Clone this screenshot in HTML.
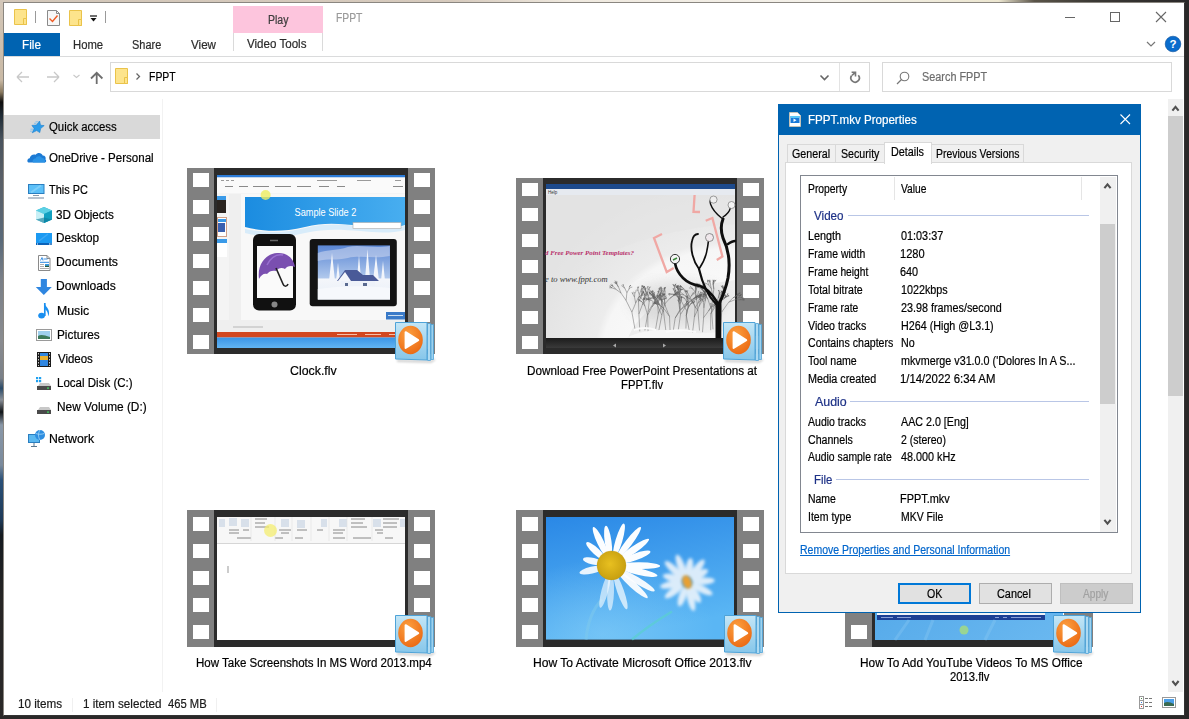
<!DOCTYPE html>
<html><head><meta charset="utf-8">
<style>
*{margin:0;padding:0;box-sizing:border-box}
html,body{width:1189px;height:719px;overflow:hidden}
body{position:relative;background:#2a2828;font-family:"Liberation Sans",sans-serif}
.a{position:absolute}
.t{position:absolute;white-space:nowrap;line-height:20px;transform-origin:0 0;font-family:"Liberation Sans",sans-serif;-webkit-text-stroke:0.2px currentColor}
svg{position:absolute;overflow:visible}
</style></head><body>
<!-- desktop strips -->
<div class=a style="left:0;top:0;width:1189px;height:3px;background:linear-gradient(90deg,#d3c7b9 0%,#d6cabd 38%,#efe9df 48%,#f4f1ea 70%,#ece6d0 84%,#5a5448 87%,#3a3834 92%,#2a2828 100%)"></div>
<div class=a style="left:0;top:0;width:4px;height:719px;background:linear-gradient(180deg,#d3c7b9 0.0%,#c9b9a5 11.1%,#8a7a60 12.8%,#0e0e0e 14.2%,#1e2a34 16.0%,#4a545e 19.5%,#5a6068 25.0%,#5a6a7a 33.4%,#7a8088 38.9%,#8a8c90 47.3%,#7a8088 52.6%,#2a4a68 54.0%,#8a9098 55.6%,#101418 57.3%,#8a98a8 59.1%,#7a8a9c 64.7%,#2a5078 66.8%,#1e3a58 72.3%,#151a20 74.4%,#262525 83.4%,#2a2828 100.0%)"></div>
<!-- window -->
<div class=a style="left:3px;top:2px;width:1182px;height:714px;border:1px solid #8a8680;border-right-color:#333;border-bottom-color:#333;background:#fff"></div>

<!-- QAT -->
<svg style="left:0;top:0" width="120" height="30">
  <path d="M14.5 9.5h12v15h-12z" fill="#fde48c" stroke="#eac34a"/>
  <path d="M23.5 18.5h3v6h-3z" fill="#fde48c" stroke="#eac34a"/>
  <path d="M35.5 11v12" stroke="#9a9a9a"/>
  <path d="M47.5 10.5h9l3 3v12h-12z" fill="#f7f7f7" stroke="#8a8a8a"/>
  <path d="M56.5 10.5v3h3" fill="none" stroke="#8a8a8a"/>
  <path d="M49.5 18.5l3 3l5-6" fill="none" stroke="#f05a22" stroke-width="1.4"/>
  <path d="M69.5 10.5h12v15h-12z" fill="#fde48c" stroke="#eac34a"/>
  <path d="M78.5 19.5h3v6h-3z" fill="#fde48c" stroke="#eac34a"/>
  <path d="M90 16h7" stroke="#111" stroke-width="1.2"/>
  <path d="M90.5 18h6l-3 3.5z" fill="#111"/>
  <path d="M105.5 11v12" stroke="#9a9a9a"/>
</svg>
<!-- pink play tab -->
<div class=a style="left:233px;top:6px;width:90px;height:27px;background:#fdc5dd"></div>
<div class=a style="left:233px;top:33px;width:1px;height:18px;background:#dadada"></div>
<div class=a style="left:322px;top:33px;width:1px;height:18px;background:#dadada"></div>
<!-- window controls -->
<div class=a style="left:1065px;top:17px;width:10px;height:1px;background:#666"></div>
<div class=a style="left:1110px;top:12px;width:10px;height:10px;border:1px solid #666"></div>
<svg style="left:1156px;top:12px" width="11" height="11"><path d="M0 0L10 10M10 0L0 10" stroke="#666" stroke-width="1.1"/></svg>
<!-- ribbon -->
<div class=a style="left:4px;top:33px;width:56px;height:23px;background:#0063b1"></div>
<div class=a style="left:4px;top:56px;width:1180px;height:1px;background:#dadbdc"></div>
<svg style="left:1146px;top:41px" width="10" height="6"><path d="M1 1L5 5L9 1" fill="none" stroke="#777" stroke-width="1.2"/></svg>
<svg style="left:1165px;top:36px" width="16" height="16"><circle cx="8" cy="8" r="7.8" fill="#0a6ccc"/><circle cx="8" cy="8" r="7.8" fill="none" stroke="#0a4f9a" stroke-width="0.6"/><text x="8" y="12.3" text-anchor="middle" font-family="Liberation Sans" font-weight="bold" font-size="11.5" fill="#fff">?</text></svg>
<!-- nav buttons -->
<svg style="left:0;top:60px" width="110" height="30">
  <path d="M17 17h12M17 17l5-5M17 17l5 5" fill="none" stroke="#c8c8c8" stroke-width="1.3"/>
  <path d="M59 17H47M59 17l-5-5M59 17l-5 5" fill="none" stroke="#c8c8c8" stroke-width="1.3"/>
  <path d="M73.5 15l3 2.5l3-2.5" fill="none" stroke="#c8c8c8" stroke-width="1.1"/>
  <path d="M96.7 13v11M91 18.5l5.7-5.7l5.7 5.7" fill="none" stroke="#6e6e6e" stroke-width="1.8"/>
</svg>
<!-- address bar -->
<div class=a style="left:110px;top:62px;width:760px;height:30px;border:1px solid #d9d9d9"></div>
<div class=a style="left:839px;top:63px;width:1px;height:28px;background:#e3e3e3"></div>
<svg style="left:110px;top:62px" width="60" height="30">
  <path d="M5.5 6.5h12v15h-12z" fill="#fde48c" stroke="#eac34a"/>
  <path d="M14.5 15.5h3v6h-3z" fill="#fde48c" stroke="#eac34a"/>
  <path d="M26.5 11.5l3 3l-3 3" fill="none" stroke="#666" stroke-width="1.3"/>
</svg>
<svg style="left:818px;top:72px" width="14" height="10"><path d="M2.5 3.5l4 4l4-4" fill="none" stroke="#666" stroke-width="1.6"/></svg>
<svg style="left:847px;top:70px" width="16" height="16"><path d="M4.66 5.59A4.2 4.2 0 1 0 11.32 5.3" fill="none" stroke="#777" stroke-width="1.7"/><path d="M5 5.3L8.3 2.4M4.6 2.3H8.5V6.5" fill="none" stroke="#777" stroke-width="1.6"/></svg>
<div class=a style="left:882px;top:62px;width:290px;height:30px;border:1px solid #d9d9d9"></div>
<svg style="left:895px;top:70px" width="16" height="16"><circle cx="9.5" cy="6.5" r="4.3" fill="none" stroke="#777" stroke-width="1.1"/><path d="M6.5 9.5L2 14" stroke="#777" stroke-width="1.2"/></svg>

<!-- nav pane -->
<div class=a style="left:4px;top:115px;width:156px;height:24px;background:#d9d9d9"></div>
<div class=a style="left:162px;top:99px;width:1px;height:593px;background:#f2f2f2"></div>
<!-- nav icons -->
<svg style="left:0;top:0" width="60" height="460">
  <!-- quick access star -->
  <path d="M39.6 121.0L40.5 125.2L44.2 125.6L40.6 128.6L39.8 132.6L36.7 130.6L32.2 132.8L34.1 128.6L31.9 125.4L36.4 125.1Z" fill="#2a9bea" stroke="#1a7fd0" stroke-width="0.6" stroke-linejoin="round"/>
  <path d="M35.5 121.8h3M34 123.3h2.5M30.5 129.2h3M30 131.2h2.5" stroke="#7cc0f0" stroke-width="0.9"/>
  <!-- onedrive -->
  <path d="M28.5 162.5c-1.5 0-1.8-4 1.2-4.2c0.5-3 3.5-4.5 6-3.5c1.5-2.5 6-2.5 7 0.8c2.5 0 3.5 2 2.8 4c1 0.5 1 2.9-0.5 2.9z" fill="#1c7ad4"/>
  <path d="M33 162.5c-1 -2 0.5-4 2.5-4c1-2.5 5-3 6.5-0.5c2 0 3.5 1.5 3 4.5z" fill="#2a93e6"/>
  <!-- this pc -->
  <rect x="28.5" y="184.5" width="15.5" height="9" fill="#5cc0f8" stroke="#2a7ec0"/>
  <path d="M31 192.5l10-7" stroke="#a8e0fc" stroke-width="2" opacity="0.45"/>
  <path d="M33 195.5h6" stroke="#8a9aaa" stroke-width="1"/>
  <path d="M28 198h16" stroke="#9aaaba" stroke-width="1.4"/>
  <!-- 3D objects -->
  <path d="M44 207l8 3.5v9l-8 3.5l-8-3.5v-9z" fill="#22b0cc"/>
  <path d="M36 210.5l8 3.5l8-3.5l-8-3.5z" fill="#5cd0e4"/>
  <path d="M36 210.5v9l8 3.5v-9z" fill="#c8f0f6"/>
  <path d="M44 214v9l8-3.5v-9z" fill="#12a0c0"/>
  <path d="M36 219.5l8 3.5l8-3.5l-8-2z" fill="#0a7898" opacity="0.6"/>
  <!-- desktop -->
  <rect x="36" y="233" width="16" height="12" fill="#1c9af2"/>
  <rect x="36" y="243" width="16" height="2" fill="#0b62b8"/>
  <rect x="37" y="243.5" width="1" height="1" fill="#fff"/><rect x="49" y="243.5" width="1" height="1" fill="#fff"/><rect x="50.5" y="243.5" width="1" height="1" fill="#fff"/>
  <path d="M39 241l9-7" stroke="#60b8f8" stroke-width="1.5" opacity="0.5"/>
  <!-- documents -->
  <path d="M38.5 255.5h8.5l3 3v12h-11.5z" fill="#fff" stroke="#8a8a8a"/>
  <path d="M47 255.5v3h3" fill="none" stroke="#8a8a8a"/>
  <path d="M40.5 260.5l1.5-3l1 3M43.5 259h4" stroke="#2a86e0" stroke-width="0.9" fill="none"/>
  <path d="M40 262.3h9" stroke="#2a86e0" stroke-width="1"/>
  <path d="M40 264.5h4M40 266.5h4M40 268.5h9" stroke="#999" stroke-width="0.8"/>
  <rect x="45" y="264" width="4" height="3" fill="#3a9ae0"/><rect x="45" y="265.8" width="4" height="1.2" fill="#2a5a3a"/>
  <!-- downloads -->
  <path d="M40.8 279h6.1v8h4.9l-8 8l-8-8h5z" fill="#2f86e0"/>
  <!-- music -->
  <path d="M44.8 303v13" stroke="#1a8ff0" stroke-width="1.7"/>
  <ellipse cx="41.6" cy="315.6" rx="3.4" ry="2.9" fill="#1a8ff0"/>
  <path d="M44.5 303.5c1 3 5 5 4.5 10c-0.2 1.5-0.6 2.3-1 2.8c0.3-3-0.8-6-3.5-7.5z" fill="#1a8ff0"/>
  <!-- pictures -->
  <rect x="36.5" y="329.5" width="15" height="11" fill="#fff" stroke="#9a9a9a"/>
  <rect x="38" y="331" width="12" height="8" fill="#9fd0ee"/>
  <path d="M38 336c3-2 6-1 12 1v2h-12z" fill="#3c7a5a"/>
  <!-- videos -->
  <rect x="37" y="352" width="14" height="15" fill="#1a1a1a"/>
  <rect x="40" y="353" width="8" height="13" fill="#2f86e0"/>
  <rect x="40" y="356" width="8" height="4" fill="#e8b030"/>
  <path d="M38.5 353v13M49.5 353v13" stroke="#ccc" stroke-width="1" stroke-dasharray="1.5 1.5"/>
  <!-- local disk -->
  <rect x="36" y="377" width="2.2" height="2.2" fill="#1ea0f0"/><rect x="39" y="377" width="2.2" height="2.2" fill="#1ea0f0"/>
  <rect x="36" y="380" width="2.2" height="2.2" fill="#1ea0f0"/><rect x="39" y="380" width="2.2" height="2.2" fill="#1ea0f0"/>
  <path d="M38 386l2-3h9l2 3z" fill="#c8c8c8"/>
  <rect x="37" y="386" width="14" height="4" fill="#4a4a4a"/>
  <rect x="47" y="387.5" width="2" height="1.2" fill="#3ee060"/>
  <!-- new volume -->
  <path d="M38 410l2-3h9l2 3z" fill="#c8c8c8"/>
  <rect x="37" y="410" width="14" height="4" fill="#4a4a4a"/>
  <rect x="47" y="411.5" width="2" height="1.2" fill="#3ee060"/>
  <!-- network -->
  <rect x="28.5" y="434.5" width="11" height="8" fill="#5ab8f0" stroke="#2a7ec0"/>
  <path d="M31 446.5h6M34 443v3" stroke="#5a7890" stroke-width="1"/>
  <circle cx="40" cy="435" r="5" fill="#2e8ee0"/>
  <path d="M36 433.5c2 1 6 1 8 0M40 430c-2 3-2 7 0 10" stroke="#a6d8f8" stroke-width="0.8" fill="none"/>
</svg>

<!-- main scrollbar -->
<div class=a style="left:1168px;top:99px;width:15px;height:593px;background:#f0f0f0"></div>
<div class=a style="left:1168px;top:116px;width:15px;height:280px;background:#cdcdcd"></div>
<svg style="left:1168px;top:99px" width="15" height="593">
  <path d="M4.4 11.6L7.5 7.8L10.6 11.6" fill="none" stroke="#505050" stroke-width="2.1"/>
  <path d="M4.4 582L7.5 585.8L10.6 582" fill="none" stroke="#505050" stroke-width="2.1"/>
</svg>
<!-- status bar -->
<div class=a style="left:72px;top:698px;width:1px;height:14px;background:#f0f0f0"></div>
<div class=a style="left:216px;top:698px;width:1px;height:14px;background:#f0f0f0"></div>
<svg style="left:1136px;top:694px" width="45" height="18">
  <rect x="3.5" y="2.5" width="4" height="12" fill="#fff" stroke="#999"/>
  <path d="M3.5 6.5h4M3.5 10.5h4" stroke="#999"/>
  <rect x="5" y="4" width="1" height="1" fill="#4a8a4a"/><rect x="5" y="8" width="1" height="1" fill="#3a7ae0"/><rect x="5" y="12" width="1" height="1" fill="#e03030"/>
  <path d="M9 4.5h3M13 4.5h3M9 8.5h3M13 8.5h3M9 12.5h3M13 12.5h3" stroke="#777"/>
  <rect x="26.5" y="3.5" width="13" height="10" fill="#fff" stroke="#999"/>
  <rect x="28" y="5" width="10" height="7" fill="#4a9ee8"/>
  <path d="M28 9c3-2 6-1 10 1v2h-10z" fill="#3a6a50"/>
</svg>
<div class=a style='left:214px;top:168px;width:194px;height:186px;background:#2b2b2b'></div>
<div class=a style='left:187px;top:168px;width:27px;height:186px;background:#808080'></div>
<div class=a style='left:193px;top:173.1px;width:16px;height:14px;background:#fff'></div>
<div class=a style='left:193px;top:200.1px;width:16px;height:14px;background:#fff'></div>
<div class=a style='left:193px;top:227.1px;width:16px;height:14px;background:#fff'></div>
<div class=a style='left:193px;top:254.1px;width:16px;height:14px;background:#fff'></div>
<div class=a style='left:193px;top:281.1px;width:16px;height:14px;background:#fff'></div>
<div class=a style='left:193px;top:308.1px;width:16px;height:14px;background:#fff'></div>
<div class=a style='left:193px;top:335.1px;width:16px;height:14px;background:#fff'></div>
<div class=a style='left:408px;top:168px;width:27px;height:186px;background:#808080'></div>
<div class=a style='left:414px;top:173.1px;width:16px;height:14px;background:#fff'></div>
<div class=a style='left:414px;top:200.1px;width:16px;height:14px;background:#fff'></div>
<div class=a style='left:414px;top:227.1px;width:16px;height:14px;background:#fff'></div>
<div class=a style='left:414px;top:254.1px;width:16px;height:14px;background:#fff'></div>
<div class=a style='left:414px;top:281.1px;width:16px;height:14px;background:#fff'></div>
<div class=a style='left:414px;top:308.1px;width:16px;height:14px;background:#fff'></div>
<div class=a style='left:414px;top:335.1px;width:16px;height:14px;background:#fff'></div>
<svg style="left:217px;top:175px" width="188" height="173">
<defs><linearGradient id="i1h" x1="0" y1="0" x2="1" y2="0"><stop offset="0" stop-color="#1b8ce0"/><stop offset="1" stop-color="#48aef0"/></linearGradient>
<linearGradient id="i1t" x1="0" y1="0" x2="0" y2="1"><stop offset="0" stop-color="#3a94e6"/><stop offset="1" stop-color="#62b4f2"/></linearGradient>
<linearGradient id="i1s" x1="0" y1="0" x2="0" y2="1"><stop offset="0" stop-color="#5a86d4"/><stop offset="0.6" stop-color="#b0c8ec"/><stop offset="0.62" stop-color="#f4f6fa"/><stop offset="1" stop-color="#e8eef8"/></linearGradient></defs>
<rect width="188" height="173" fill="#efefef"/>
<rect width="188" height="2.5" fill="#2b7bd8"/>
<rect y="2.5" width="188" height="16" fill="#fafafa"/>
<path d="M4 5.5h3M9 5.5h3M14 5.5h3M100 5.5h20M140 5.5h14M178 5.5h6" stroke="#9a9a9a" stroke-width="1"/><path d="M8 11.5h8M22 11.5h9M36 11.5h16M58 11.5h16M80 11.5h14M102 11.5h10M120 11.5h8M176 11.5h10" stroke="#8a8a8a" stroke-width="1"/>
<rect y="19" width="12" height="126" fill="#f4f4f4"/>
<rect x="0" y="21" width="9" height="17" fill="#2a2420"/><rect x="0" y="21" width="9" height="4" fill="#3a9ae8"/>
<rect x="0.5" y="42.5" width="9" height="19" fill="#fff" stroke="#d0a088" stroke-width="1"/><rect x="1" y="44" width="8" height="3" fill="#3a9ae8"/><rect x="1" y="48" width="7" height="9" fill="#3a60b0"/>
<rect x="0" y="64" width="10" height="18" fill="#fff"/><rect x="0" y="64" width="10" height="4" fill="#3a9ae8"/>
<rect x="24" y="19" width="164" height="126" fill="#f8f8f8"/>
<path d="M28 22h160v28c-30 10-60 -8 -100 2c-25 6-45 4-60 0z" fill="url(#i1h)"/>
<path d="M28 54c20 4 40 4 60-1c40-10 70 6 100-2v4c-30 8-60 -6 -100 3c-25 6-45 4-60 0z" fill="#d8ecfa"/>
<text x="77.5" y="40.5" textLength="61.8" lengthAdjust="spacingAndGlyphs" font-family="Liberation Sans" font-size="11" fill="#fff">Sample Slide 2</text>
<rect x="136" y="47.5" width="48" height="6" fill="#fff" stroke="#aaa" stroke-width="0.6"/>
<circle cx="48.6" cy="20" r="5" fill="#eeee60" opacity="0.8"/><rect x="36" y="59" width="43" height="76.5" rx="6" fill="#111"/>
<rect x="40" y="71" width="36" height="52" fill="#fafafa"/>
<circle cx="57.5" cy="129.5" r="3" fill="#888"/>
<path d="M53 65.5h8" stroke="#666" stroke-width="1.5"/>
<path d="M42 104c-2-14 6-25 18-26c10-1 17 6 18 14c-4-2-8-1-10 2c-3-2-7-1-9 2c-3-1-7 0-9 3c-3-1-6 1-8 5z" fill="#7a4fb0"/><path d="M50 90c4-8 10-11 16-10" stroke="#9a70d0" stroke-width="1.5" fill="none"/>
<path d="M59 93l7 16c1 3 4 3 5 0" fill="none" stroke="#222" stroke-width="1.6"/>
<rect x="92.7" y="63.9" width="87.1" height="67.3" rx="3" fill="#141414"/>
<rect x="100.8" y="70.4" width="72.2" height="54.2" fill="url(#i1s)"/>
<path d="M100.8 78c10-4 20-2 30-6c12-3 25 2 42-1v10c-15 3-30-1-42 2c-12 3-20 0-30 3z" fill="#c8d4ee" opacity="0.6"/>
<g fill="#f2f5fb"><path d="M112 106l3-28l3 28z"/><path d="M119 106l2-18l2 18z"/><path d="M140 104l2-24l2 24z"/><path d="M148 104l2.5-30l2.5 30z"/><path d="M156 106l3-26l3 26z"/><path d="M164 106l2-20l2 20z"/></g>
<path d="M120 106l8-11h12l6 5l10 0l6 6z" fill="#4a5a98"/>
<path d="M121 106l7-9l6 9z" fill="#f4f6fb"/>
<rect x="124" y="106" width="34" height="8" fill="#eef2fa"/>
<rect x="128" y="108" width="3" height="3" fill="#5a6a90"/><rect x="146" y="108" width="4" height="3" fill="#5a6a90"/>
<path d="M100.8 114c20-3 45-4 72.2-1v11.6h-72.2z" fill="#f6f8fc"/>
<rect x="169" y="137" width="19" height="7.5" fill="#3a7ac8"/><path d="M171 140.5h15" stroke="#cde" stroke-width="1"/>
<path d="M16 152h30" stroke="#aaa" stroke-width="0.8"/>
<rect y="157" width="188" height="5.5" fill="#d2471f"/>
<path d="M120 159.5h20M148 159.5h16M172 159.5h14" stroke="#f8c0a8" stroke-width="1"/>
<rect y="162.5" width="188" height="10.5" fill="url(#i1t)"/>
</svg>
<svg style="left:395px;top:322px" width="42" height="42">
<defs><linearGradient id="wb395322" x1="0" y1="0" x2="0" y2="1"><stop offset="0" stop-color="#c4e6f6"/><stop offset="1" stop-color="#86c6ea"/></linearGradient>
<radialGradient id="wo395322" cx="0.4" cy="0.3" r="0.8"><stop offset="0" stop-color="#fca040"/><stop offset="1" stop-color="#ea6510"/></radialGradient></defs>
<filter id="ws395322" x="-50%" y="-50%" width="200%" height="200%"><feGaussianBlur stdDeviation="1.2"/></filter>
<path d="M2 37.5l34 1l4-2v2l-4 2.5l-34-1z" fill="#000" opacity="0.18" filter="url(#ws395322)"/>
<path d="M36 2.5h2.5v35h-2.5z" fill="#9fd2ee" stroke="#4ea3d8" stroke-width="0.8"/>
<path d="M32.5 1.5h3v37h-3z" fill="#aedaf2" stroke="#4ea3d8" stroke-width="0.8"/>
<path d="M0.5 0.5h31.5v37.5l-31.5 -1z" fill="url(#wb395322)" stroke="#4ea3d8" stroke-width="1"/>
<ellipse cx="15.5" cy="18" rx="12.3" ry="14.2" fill="url(#wo395322)"/>
<path d="M10.6 10.2L10.6 26L23.2 18.2Z" fill="#fff" stroke="#fff" stroke-width="2" stroke-linejoin="round"/>
</svg>
<div class=a style='left:543px;top:178px;width:194px;height:176px;background:#2b2b2b'></div>
<div class=a style='left:516px;top:178px;width:27px;height:176px;background:#808080'></div>
<div class=a style='left:522px;top:182.8px;width:16px;height:13px;background:#fff'></div>
<div class=a style='left:522px;top:208.4px;width:16px;height:13px;background:#fff'></div>
<div class=a style='left:522px;top:233.9px;width:16px;height:13px;background:#fff'></div>
<div class=a style='left:522px;top:259.5px;width:16px;height:13px;background:#fff'></div>
<div class=a style='left:522px;top:285.0px;width:16px;height:13px;background:#fff'></div>
<div class=a style='left:522px;top:310.6px;width:16px;height:13px;background:#fff'></div>
<div class=a style='left:522px;top:336.1px;width:16px;height:13px;background:#fff'></div>
<div class=a style='left:737px;top:178px;width:27px;height:176px;background:#808080'></div>
<div class=a style='left:743px;top:182.8px;width:16px;height:13px;background:#fff'></div>
<div class=a style='left:743px;top:208.4px;width:16px;height:13px;background:#fff'></div>
<div class=a style='left:743px;top:233.9px;width:16px;height:13px;background:#fff'></div>
<div class=a style='left:743px;top:259.5px;width:16px;height:13px;background:#fff'></div>
<div class=a style='left:743px;top:285.0px;width:16px;height:13px;background:#fff'></div>
<div class=a style='left:743px;top:310.6px;width:16px;height:13px;background:#fff'></div>
<div class=a style='left:743px;top:336.1px;width:16px;height:13px;background:#fff'></div>
<svg style="left:546px;top:184px" width="189" height="164">
<defs><radialGradient id="i2g" cx="0.95" cy="1.05" r="1.05"><stop offset="0" stop-color="#ffffff"/><stop offset="0.62" stop-color="#f6f6f6"/><stop offset="0.66" stop-color="#ececec"/><stop offset="1" stop-color="#e2e2e2"/></radialGradient>
<linearGradient id="i2b" x1="0" y1="0" x2="0" y2="1"><stop offset="0" stop-color="#1c1c1c"/><stop offset="1" stop-color="#3a3a3a"/></linearGradient>
<filter id="bt"><feGaussianBlur stdDeviation="0.35"/></filter><filter id="bl3" x="-50%" y="-50%" width="200%" height="200%"><feGaussianBlur stdDeviation="6"/></filter></defs>
<rect width="189" height="164" fill="url(#i2g)"/>
<path d="M0 110C40 70 110 45 189 40V0H0z" fill="#e4e4e4" opacity="0.6"/>
<rect width="189" height="5" fill="#1d4a8c"/>
<rect y="5" width="189" height="6" fill="#e6eaf0"/>
<text x="2" y="10" font-family="Liberation Sans" font-size="4.5" fill="#333">Help</text>
<text x="-1" y="71" font-family="Liberation Serif" font-style="italic" font-size="6.9" font-weight="bold" fill="#b8306a" transform="scale(1 1)">d Free Power Point Templates?</text>
<text x="-1" y="98" font-family="Liberation Serif" font-style="italic" font-size="8.5" fill="#333">e to www.fppt.com</text>
<g filter="url(#bt)">
<path d="M82 154C95 118 150 100 189 96V154z" fill="#d8d8d8" opacity="0.35"/>
<ellipse cx="132" cy="118" rx="48" ry="22" fill="#b0b0b0" opacity="0.3" filter="url(#bl3)"/>
<g fill="none" stroke="#5e5e5e" stroke-width="0.55" opacity="0.85"><path d="M89.2 146.3L85.9 128.1M85.9 128.1L80.1 116.5M80.1 116.5L80.9 108.7M80.9 108.7L78.8 104.2M78.8 104.2L76.7 102.6M76.7 102.6L75.4 101.6M78.8 104.2L77.4 101.9M77.4 101.9L77.4 100.1M77.4 101.9L76.4 100.5M80.9 108.7L82.9 105.3M82.9 105.3L84.7 103.4M84.7 103.4L86.3 103.1M82.9 105.3L83.5 102.6M83.5 102.6L84.9 101.3M83.5 102.6L84.6 101.0M83.5 102.6L84.7 101.2M80.1 116.5L75.0 109.0M75.0 109.0L72.5 103.1M72.5 103.1L70.8 99.8M70.8 99.8L70.4 97.9M70.8 99.8L68.9 98.7M70.8 99.8L71.0 97.3M72.5 103.1L70.2 99.5M70.2 99.5L69.9 96.9M70.2 99.5L67.8 98.4M70.2 99.5L68.9 96.6M75.0 109.0L69.9 105.3M69.9 105.3L67.0 102.2M67.0 102.2L64.5 101.0M67.0 102.2L64.5 100.9M67.0 102.2L65.7 99.8M69.9 105.3L65.9 103.8M65.9 103.8L63.4 102.3M65.9 103.8L63.7 101.8M65.9 103.8L63.2 103.8M85.9 128.1L89.7 119.0M89.7 119.0L92.5 113.3M92.5 113.3L95.5 110.4M95.5 110.4L96.7 108.7M95.5 110.4L97.4 109.6M92.5 113.3L95.8 111.4M95.8 111.4L97.9 110.9M97.9 110.9L99.4 111.2M97.9 110.9L99.4 110.4M95.8 111.4L97.1 109.1M97.1 109.1L97.6 107.7M97.1 109.1L97.7 107.4M97.1 109.1L97.0 107.3M89.7 119.0L88.5 113.1M88.5 113.1L88.8 109.4M88.8 109.4L89.9 107.4M89.9 107.4L90.2 105.9M88.8 109.4L87.8 107.7M88.5 113.1L86.9 110.1M86.9 110.1L85.9 108.4M86.9 110.1L87.0 108.2M93.8 147.4L92.9 130.0M92.9 130.0L92.5 117.8M92.5 117.8L93.3 110.7M93.3 110.7L92.1 107.0M92.1 107.0L91.9 104.3M91.9 104.3L92.7 102.7M91.9 104.3L91.8 102.7M91.9 104.3L92.3 102.6M92.1 107.0L91.0 105.3M93.3 110.7L95.0 105.9M95.0 105.9L97.3 103.7M97.3 103.7L98.6 102.6M97.3 103.7L98.6 102.0M97.3 103.7L97.7 101.9M95.0 105.9L96.0 102.9M96.0 102.9L97.0 101.2M96.0 102.9L96.0 101.1M96.0 102.9L96.3 101.1M92.5 117.8L95.7 112.1M95.7 112.1L95.5 107.8M95.5 107.8L96.2 105.7M95.5 107.8L96.2 105.5M96.2 105.5L96.0 104.0M95.7 112.1L96.5 108.3M96.5 108.3L97.8 106.9M96.5 108.3L97.2 105.8M97.2 105.8L97.3 104.2M92.9 130.0L96.3 120.8M96.3 120.8L100.0 116.1M100.0 116.1L104.0 114.7M104.0 114.7L106.9 114.2M106.9 114.2L108.6 113.4M106.9 114.2L108.3 113.5M106.9 114.2L108.6 114.2M104.0 114.7L106.5 113.2M106.5 113.2L107.8 112.0M106.5 113.2L108.3 112.0M106.5 113.2L107.2 111.9M100.0 116.1L102.4 114.2M102.4 114.2L104.6 114.0M102.4 114.2L104.3 113.9M96.3 120.8L98.5 115.0M98.5 115.0L100.5 111.6M100.5 111.6L101.1 109.0M101.1 109.0L101.9 107.5M101.1 109.0L100.9 107.4M100.5 111.6L101.0 109.7M98.5 115.0L98.8 111.2M98.8 111.2L97.8 109.0M97.8 109.0L96.8 107.8M97.8 109.0L97.6 107.3M98.8 111.2L98.2 108.9M98.2 108.9L97.1 107.6M98.9 146.5L102.0 127.8M102.0 127.8L103.2 117.7M103.2 117.7L102.5 111.6M102.5 111.6L100.0 108.3M100.0 108.3L99.5 106.0M99.5 106.0L98.7 104.6M100.0 108.3L99.6 105.4M99.6 105.4L100.4 103.8M99.6 105.4L99.3 103.7M99.6 105.4L98.7 103.8M102.5 111.6L103.9 107.9M103.9 107.9L103.6 105.7M103.6 105.7L103.1 104.3M103.9 107.9L105.0 106.2M103.2 117.7L101.4 110.7M101.4 110.7L99.3 106.6M99.3 106.6L97.7 103.9M97.7 103.9L97.0 102.1M97.7 103.9L96.5 102.2M97.7 103.9L96.2 102.5M99.3 106.6L98.9 103.8M98.9 103.8L98.0 102.5M98.9 103.8L98.3 101.9M98.9 103.8L98.3 102.3M101.4 110.7L102.1 106.2M102.1 106.2L101.7 103.7M101.7 103.7L102.2 102.2M101.7 103.7L101.8 102.1M102.1 106.2L103.4 104.0M103.4 104.0L104.0 102.6M103.4 104.0L104.5 102.8M102.0 127.8L107.3 119.5M107.3 119.5L112.6 116.1M112.6 116.1L116.7 115.6M116.7 115.6L119.4 114.5M119.4 114.5L120.7 113.3M119.4 114.5L120.9 114.8M119.4 114.5L120.9 113.8M116.7 115.6L118.5 114.3M112.6 116.1L115.4 112.7M115.4 112.7L117.3 111.1M117.3 111.1L118.5 110.0M117.3 111.1L118.8 110.4M115.4 112.7L117.7 110.6M117.7 110.6L119.5 110.2M117.7 110.6L119.2 109.5M117.7 110.6L119.4 110.2M107.3 119.5L111.1 114.5M111.1 114.5L111.8 110.6M111.8 110.6L111.8 108.6M111.8 110.6L112.7 107.9M112.7 107.9L112.7 105.9M112.7 107.9L113.3 106.4M112.7 107.9L113.9 106.7M111.1 114.5L112.8 111.7M112.8 111.7L114.5 110.2M114.5 110.2L115.9 109.5M112.8 111.7L114.3 110.8M102.1 148.6L101.7 131.1M101.7 131.1L99.0 122.3M99.0 122.3L97.4 116.5M97.4 116.5L98.7 112.7M98.7 112.7L99.7 110.4M99.7 110.4L100.1 108.8M99.7 110.4L100.1 108.7M98.7 112.7L99.8 110.8M97.4 116.5L95.0 114.1M95.0 114.1L93.3 112.5M95.0 114.1L94.6 112.4M99.0 122.3L96.2 118.0M96.2 118.0L93.5 116.2M93.5 116.2L91.9 114.8M93.5 116.2L92.6 114.8M96.2 118.0L94.0 116.7M94.0 116.7L92.4 116.2M101.7 131.1L105.8 123.2M105.8 123.2L108.7 118.2M108.7 118.2L108.8 114.4M108.8 114.4L110.1 112.3M108.8 114.4L108.2 112.1M108.2 112.1L108.3 110.5M108.7 118.2L109.7 115.2M109.7 115.2L111.0 113.9M109.7 115.2L110.3 113.4M105.8 123.2L108.9 119.6M108.9 119.6L111.2 118.2M111.2 118.2L112.0 116.9M111.2 118.2L112.9 118.0M108.9 119.6L110.0 117.3M109.5 145.7L112.3 129.5M112.3 129.5L115.9 121.4M115.9 121.4L115.2 115.4M115.2 115.4L113.2 112.4M113.2 112.4L112.9 110.2M113.2 112.4L110.8 111.2M115.2 115.4L112.8 112.6M112.8 112.6L111.6 110.9M112.8 112.6L111.5 110.6M115.9 121.4L115.3 116.0M115.3 116.0L115.1 112.3M115.1 112.3L114.8 110.0M114.8 110.0L115.0 108.5M114.8 110.0L114.3 108.6M114.8 110.0L114.4 108.5M115.1 112.3L116.3 110.1M116.3 110.1L117.6 109.1M115.3 116.0L115.2 112.9M115.2 112.9L114.3 111.5M115.2 112.9L114.4 111.0M112.3 129.5L111.5 119.1M111.5 119.1L109.2 114.0M109.2 114.0L108.0 111.4M108.0 111.4L106.7 110.1M108.0 111.4L106.4 110.4M109.2 114.0L108.7 111.2M108.7 111.2L108.1 109.6M108.7 111.2L108.2 109.4M111.5 119.1L113.8 114.3M113.8 114.3L114.2 111.6M114.2 111.6L114.5 110.0M114.2 111.6L114.2 109.7M113.8 114.3L113.4 111.5M113.4 111.5L114.1 110.0M113.4 111.5L113.6 109.6M112.6 147.6L115.8 131.2M115.8 131.2L118.5 120.3M118.5 120.3L118.5 112.6M118.5 112.6L117.5 107.6M117.5 107.6L115.3 104.7M115.3 104.7L113.5 103.6M115.3 104.7L114.4 102.9M115.3 104.7L114.9 102.5M117.5 107.6L118.2 105.1M118.2 105.1L118.5 103.3M118.2 105.1L119.3 104.0M118.5 112.6L119.0 108.1M119.0 108.1L118.3 105.6M118.3 105.6L118.2 103.9M118.3 105.6L118.2 103.9M119.0 108.1L118.8 104.8M118.8 104.8L118.4 103.2M118.8 104.8L119.7 102.9M118.8 104.8L119.5 103.1M118.5 120.3L123.6 114.6M123.6 114.6L127.6 111.6M127.6 111.6L130.5 109.7M130.5 109.7L132.4 109.6M130.5 109.7L131.7 107.8M130.5 109.7L132.6 108.5M127.6 111.6L129.1 109.5M129.1 109.5L130.7 108.8M129.1 109.5L130.6 109.0M129.1 109.5L130.0 108.0M123.6 114.6L127.6 111.3M127.6 111.3L128.8 107.8M128.8 107.8L130.0 105.6M128.8 107.8L130.3 106.2M128.8 107.8L129.6 105.9M127.6 111.3L130.3 108.9M130.3 108.9L131.4 107.2M130.3 108.9L132.4 108.0M130.3 108.9L132.2 108.7M115.8 131.2L111.4 121.0M111.4 121.0L105.4 116.3M105.4 116.3L101.4 115.0M101.4 115.0L99.7 113.5M101.4 115.0L98.6 115.3M98.6 115.3L96.8 116.0M98.6 115.3L96.9 115.0M98.6 115.3L96.9 116.2M105.4 116.3L101.4 115.0M101.4 115.0L99.8 113.6M101.4 115.0L98.7 114.7M98.7 114.7L97.0 114.1M98.7 114.7L96.9 114.5M98.7 114.7L97.2 113.7M111.4 121.0L107.8 114.9M107.8 114.9L106.6 111.0M106.6 111.0L105.9 108.6M105.9 108.6L105.6 107.0M106.6 111.0L106.8 108.7M106.8 108.7L107.3 107.2M107.8 114.9L105.9 111.5M105.9 111.5L104.3 109.6M104.3 109.6L103.3 108.5M104.3 109.6L103.5 108.2M104.3 109.6L102.9 108.7M105.9 111.5L104.8 109.5M104.8 109.5L103.7 108.4M104.8 109.5L103.7 108.3M119.8 146.3L117.6 128.2M117.6 128.2L113.0 120.1M113.0 120.1L110.3 114.1M110.3 114.1L106.7 111.6M106.7 111.6L104.7 109.5M104.7 109.5L103.3 108.2M104.7 109.5L103.2 108.5M104.7 109.5L103.1 109.1M106.7 111.6L104.7 110.2M110.3 114.1L107.2 110.7M107.2 110.7L105.8 108.6M105.8 108.6L105.2 107.0M105.8 108.6L105.6 107.1M105.8 108.6L104.4 107.8M107.2 110.7L106.7 108.1M106.7 108.1L106.5 106.3M106.7 108.1L106.6 106.5M106.7 108.1L107.0 106.6M113.0 120.1L109.2 115.8M109.2 115.8L107.6 113.2M107.6 113.2L107.6 111.6M107.6 113.2L106.7 111.8M109.2 115.8L107.5 112.4M107.5 112.4L107.7 109.8M107.7 109.8L107.0 108.3M107.7 109.8L108.6 108.5M107.7 109.8L108.6 108.2M107.5 112.4L105.4 111.0M105.4 111.0L103.7 110.9M117.6 128.2L116.2 117.8M116.2 117.8L117.0 111.6M117.0 111.6L115.5 107.9M115.5 107.9L113.7 105.8M113.7 105.8L113.4 103.9M113.7 105.8L112.3 104.9M113.7 105.8L112.9 104.4M115.5 107.9L115.8 105.6M115.8 105.6L116.5 104.2M117.0 111.6L116.1 107.3M116.1 107.3L115.1 104.7M115.1 104.7L113.9 103.3M115.1 104.7L115.5 102.9M116.1 107.3L114.4 105.6M114.4 105.6L113.2 104.6M114.4 105.6L113.6 104.3M116.2 117.8L114.3 112.2M114.3 112.2L114.8 109.1M114.8 109.1L115.0 107.2M114.8 109.1L115.2 107.4M114.3 112.2L112.9 108.7M112.9 108.7L112.0 107.0M112.9 108.7L111.5 107.1M124.2 150.0L123.5 132.5M123.5 132.5L118.0 124.6M118.0 124.6L113.5 121.0M113.5 121.0L110.8 119.2M110.8 119.2L109.5 117.6M110.8 119.2L109.3 118.0M113.5 121.0L110.4 119.3M110.4 119.3L108.4 119.1M110.4 119.3L108.2 118.3M118.0 124.6L113.5 120.3M113.5 120.3L110.0 119.7M110.0 119.7L108.2 119.2M110.0 119.7L107.6 119.3M107.6 119.3L106.0 118.8M113.5 120.3L111.7 116.8M111.7 116.8L109.5 115.6M111.7 116.8L111.2 114.5M123.5 132.5L119.4 122.3M119.4 122.3L115.9 116.4M115.9 116.4L113.0 114.3M113.0 114.3L111.9 112.1M111.9 112.1L110.6 111.2M113.0 114.3L111.2 112.5M111.2 112.5L109.5 112.1M111.2 112.5L110.5 111.1M115.9 116.4L112.5 114.5M112.5 114.5L111.0 113.2M112.5 114.5L111.1 112.7M119.4 122.3L118.6 116.2M118.6 116.2L119.6 113.1M119.6 113.1L120.2 111.6M119.6 113.1L119.2 111.4M118.6 116.2L117.1 113.0M117.1 113.0L115.3 111.5M117.1 113.0L117.5 110.9M117.5 110.9L117.0 109.4M117.5 110.9L117.7 109.4M117.5 110.9L116.8 109.5M127.0 148.5L129.2 134.0M129.2 134.0L134.5 125.9M134.5 125.9L138.7 122.8M138.7 122.8L140.6 120.9M140.6 120.9L141.3 119.3M140.6 120.9L142.2 119.8M138.7 122.8L140.3 120.5M140.3 120.5L141.6 119.4M140.3 120.5L141.1 119.2M134.5 125.9L138.4 121.3M138.4 121.3L140.4 118.7M140.4 118.7L141.5 117.1M140.4 118.7L141.3 117.0M138.4 121.3L140.8 118.4M140.8 118.4L141.7 116.5M140.8 118.4L142.1 116.8M129.2 134.0L134.0 125.5M134.0 125.5L133.7 120.2M133.7 120.2L132.7 117.2M132.7 117.2L131.1 115.9M132.7 117.2L133.1 115.0M133.1 115.0L132.5 113.6M133.7 120.2L135.0 116.6M135.0 116.6L135.3 114.0M135.3 114.0L135.1 112.4M135.3 114.0L135.5 112.4M135.0 116.6L135.4 114.1M135.4 114.1L136.0 112.4M135.4 114.1L135.0 112.5M134.0 125.5L134.2 119.5M134.2 119.5L133.5 115.3M133.5 115.3L133.7 112.7M133.7 112.7L133.7 110.8M133.7 112.7L134.0 110.9M133.5 115.3L131.8 112.8M131.8 112.8L130.9 111.3M131.8 112.8L131.3 111.1M131.8 112.8L130.5 111.6M134.2 119.5L133.5 115.7M133.5 115.7L133.4 113.5M133.4 113.5L133.7 112.1M133.5 115.7L133.1 113.1M133.1 113.1L132.0 111.8M131.8 149.1L134.5 130.4M134.5 130.4L132.6 117.7M132.6 117.7L133.2 110.2M133.2 110.2L132.4 106.0M132.4 106.0L132.0 103.0M132.0 103.0L132.7 100.9M132.0 103.0L130.9 101.5M132.0 103.0L131.0 101.4M132.4 106.0L132.7 103.6M132.7 103.6L133.7 102.4M132.7 103.6L133.0 101.9M133.2 110.2L134.7 106.3M134.7 106.3L134.3 104.1M134.3 104.1L133.5 102.8M134.3 104.1L133.8 102.7M134.7 106.3L136.3 105.0M132.6 117.7L132.1 110.1M132.1 110.1L129.0 105.8M129.0 105.8L128.2 102.3M128.2 102.3L127.4 100.3M128.2 102.3L126.5 100.3M128.2 102.3L127.8 100.2M129.0 105.8L128.7 102.0M128.7 102.0L130.0 99.6M128.7 102.0L129.8 100.1M128.7 102.0L129.6 100.1M132.1 110.1L131.9 105.8M131.9 105.8L131.9 103.1M131.9 103.1L130.9 101.6M131.9 103.1L132.4 101.6M131.9 103.1L131.9 101.3M131.9 105.8L131.2 103.5M131.2 103.5L130.8 102.0M131.2 103.5L130.1 102.1M134.5 130.4L141.8 119.3M141.8 119.3L147.6 114.9M147.6 114.9L151.1 111.6M151.1 111.6L154.1 111.0M154.1 111.0L155.9 110.6M154.1 111.0L155.6 110.8M154.1 111.0L156.0 111.0M151.1 111.6L152.3 109.0M152.3 109.0L152.5 107.0M147.6 114.9L151.2 112.6M151.2 112.6L153.9 111.9M153.9 111.9L155.8 111.2M153.9 111.9L155.7 111.7M153.9 111.9L155.4 110.8M151.2 112.6L153.1 110.7M153.1 110.7L153.5 109.1M153.1 110.7L154.8 110.3M141.8 119.3L146.9 114.9M146.9 114.9L150.4 113.4M150.4 113.4L152.6 112.5M152.6 112.5L154.3 112.7M150.4 113.4L152.3 111.9M146.9 114.9L149.7 112.7M149.7 112.7L151.0 111.0M149.7 112.7L151.8 112.4M139.9 144.5L140.5 126.5M140.5 126.5L146.0 117.8M146.0 117.8L149.4 113.8M149.4 113.8L152.9 112.5M152.9 112.5L154.3 111.0M152.9 112.5L155.1 112.9M155.1 112.9L156.7 112.7M149.4 113.8L152.5 111.6M152.5 111.6L154.8 110.8M154.8 110.8L156.3 110.9M152.5 111.6L154.8 110.9M146.0 117.8L152.1 113.9M152.1 113.9L155.8 112.6M155.8 112.6L158.4 112.1M158.4 112.1L160.1 111.1M158.4 112.1L159.8 110.9M155.8 112.6L157.3 110.6M157.3 110.6L158.8 109.7M157.3 110.6L158.7 109.8M157.3 110.6L157.8 109.0M152.1 113.9L155.5 111.0M155.5 111.0L158.3 110.5M158.3 110.5L159.9 109.5M158.3 110.5L160.0 110.3M158.3 110.5L159.9 110.1M155.5 111.0L156.2 108.7M156.2 108.7L157.3 107.4M140.5 126.5L135.3 117.1M135.3 117.1L134.2 111.7M134.2 111.7L133.0 108.8M133.0 108.8L133.0 106.9M133.0 108.8L131.3 107.4M134.2 111.7L133.7 108.5M133.7 108.5L133.0 106.9M133.7 108.5L134.6 106.4M134.6 106.4L135.3 105.1M134.6 106.4L134.7 104.9M135.3 117.1L130.4 111.8M130.4 111.8L126.9 110.2M126.9 110.2L124.2 109.8M124.2 109.8L122.5 110.2M124.2 109.8L122.6 110.3M124.2 109.8L122.3 109.9M126.9 110.2L124.5 110.6M124.5 110.6L123.1 111.4M130.4 111.8L129.2 107.9M129.2 107.9L127.6 105.7M127.6 105.7L127.0 104.0M129.2 107.9L127.6 105.8M127.6 105.8L127.3 104.2M143.2 146.3L140.3 131.4M140.3 131.4L142.2 123.3M142.2 123.3L144.7 119.7M144.7 119.7L147.5 118.5M147.5 118.5L148.5 117.2M147.5 118.5L149.2 117.4M144.7 119.7L147.3 118.5M147.3 118.5L148.2 117.1M147.3 118.5L149.0 117.9M142.2 123.3L140.7 117.8M140.7 117.8L140.8 114.4M140.8 114.4L142.0 112.5M142.0 112.5L142.2 110.9M140.8 114.4L140.6 112.3M140.7 117.8L138.8 114.6M138.8 114.6L136.5 113.4M136.5 113.4L135.4 112.2M136.5 113.4L135.0 113.4M136.5 113.4L134.7 113.2M138.8 114.6L137.3 112.9M140.3 131.4L142.4 121.9M142.4 121.9L143.0 115.1M143.0 115.1L140.8 110.9M140.8 110.9L140.9 108.1M140.9 108.1L141.8 106.5M140.9 108.1L140.5 106.4M140.9 108.1L141.1 106.2M140.8 110.9L139.5 108.2M139.5 108.2L139.6 106.6M139.5 108.2L138.7 106.8M139.5 108.2L138.8 106.5M143.0 115.1L145.2 112.0M145.2 112.0L146.6 109.8M146.6 109.8L147.5 108.1M146.6 109.8L148.2 108.9M145.2 112.0L147.1 110.4M147.1 110.4L148.4 109.3M142.4 121.9L141.8 116.2M141.8 116.2L141.4 113.1M141.4 113.1L140.4 111.7M141.4 113.1L141.0 111.1M141.8 116.2L140.8 113.3M140.8 113.3L139.3 111.9M140.8 113.3L139.5 111.9M146.5 148.8L148.4 133.0M148.4 133.0L153.0 122.5M153.0 122.5L156.5 116.2M156.5 116.2L158.7 111.6M158.7 111.6L159.0 107.9M159.0 107.9L158.1 105.7M159.0 107.9L157.9 106.2M159.0 107.9L159.9 105.9M158.7 111.6L159.5 108.6M159.5 108.6L159.5 106.9M159.5 108.6L159.0 106.8M159.5 108.6L160.4 107.4M156.5 116.2L157.4 112.1M157.4 112.1L157.5 109.8M157.5 109.8L158.3 108.3M157.4 112.1L156.7 109.4M156.7 109.4L155.5 108.4M153.0 122.5L154.5 116.1M154.5 116.1L157.0 113.2M157.0 113.2L158.2 111.0M158.2 111.0L158.8 109.5M157.0 113.2L158.8 112.3M154.5 116.1L154.4 112.2M154.4 112.2L155.3 110.5M154.4 112.2L154.9 109.5M154.9 109.5L154.3 107.8M154.9 109.5L155.9 108.2M154.9 109.5L154.4 107.7M148.4 133.0L149.1 124.1M149.1 124.1L147.7 119.4M147.7 119.4L146.1 117.2M146.1 117.2L146.1 115.6M147.7 119.4L145.8 117.8M145.8 117.8L144.8 116.6M149.1 124.1L151.8 119.4M151.8 119.4L153.1 116.1M153.1 116.1L154.7 114.2M153.1 116.1L153.7 113.8M153.7 113.8L153.4 112.2M151.8 119.4L154.1 117.2M154.1 117.2L155.4 115.3M154.1 117.2L155.9 116.0M155.9 116.0L157.2 115.3M153.5 146.5L152.0 127.1M152.0 127.1L145.5 116.0M145.5 116.0L141.2 107.9M141.2 107.9L137.2 105.5M137.2 105.5L134.6 105.6M134.6 105.6L133.2 106.4M134.6 105.6L133.0 105.0M134.6 105.6L133.2 105.0M137.2 105.5L134.3 104.7M134.3 104.7L132.8 104.9M134.3 104.7L132.7 104.4M141.2 107.9L137.8 104.7M137.8 104.7L135.3 102.8M135.3 102.8L133.9 102.1M135.3 102.8L133.7 101.4M135.3 102.8L134.3 101.2M137.8 104.7L135.4 102.9M135.4 102.9L134.5 101.3M135.4 102.9L133.3 102.7M135.4 102.9L133.7 102.4M145.5 116.0L137.9 110.9M137.9 110.9L133.6 107.3M133.6 107.3L131.4 104.3M131.4 104.3L129.7 102.5M131.4 104.3L131.1 102.3M131.4 104.3L129.8 102.6M133.6 107.3L131.5 103.9M131.5 103.9L129.9 101.5M131.5 103.9L129.6 103.0M131.5 103.9L131.4 101.1M137.9 110.9L133.1 110.1M133.1 110.1L129.6 110.5M129.6 110.5L127.6 110.7M129.6 110.5L127.7 111.7M129.6 110.5L127.4 110.6M133.1 110.1L130.6 110.4M130.6 110.4L129.0 109.5M130.6 110.4L129.0 109.7M130.6 110.4L129.0 109.6M152.0 127.1L150.7 116.3M150.7 116.3L149.7 108.7M149.7 108.7L150.7 104.2M150.7 104.2L151.4 101.6M151.4 101.6L152.2 100.0M151.4 101.6L152.1 100.0M151.4 101.6L151.0 99.9M150.7 104.2L152.3 101.4M152.3 101.4L153.0 99.6M152.3 101.4L153.0 99.7M152.3 101.4L154.2 100.3M149.7 108.7L146.9 105.1M146.9 105.1L145.4 103.1M145.4 103.1L144.0 102.1M146.9 105.1L144.6 104.0M144.6 104.0L142.9 104.0M150.7 116.3L149.1 109.3M149.1 109.3L149.9 105.3M149.9 105.3L149.7 102.6M149.7 102.6L149.8 101.1M149.7 102.6L150.5 101.1M149.9 105.3L149.6 103.1M149.1 109.3L149.7 104.2M149.7 104.2L150.7 101.1M150.7 101.1L151.5 99.1M150.7 101.1L152.0 99.4M150.7 101.1L150.7 98.8M149.7 104.2L149.3 101.5M149.3 101.5L148.3 100.0M149.3 101.5L149.4 99.6M156.5 148.2L157.6 133.7M157.6 133.7L157.9 123.9M157.9 123.9L159.1 117.2M159.1 117.2L159.9 112.5M159.9 112.5L161.0 109.9M161.0 109.9L162.3 108.6M159.9 112.5L158.7 109.2M158.7 109.2L159.0 107.2M158.7 109.2L159.0 107.0M158.7 109.2L158.0 107.6M159.1 117.2L160.1 113.5M160.1 113.5L160.4 111.0M160.4 111.0L160.1 109.4M160.1 113.5L159.2 111.1M159.2 111.1L158.1 109.9M159.2 111.1L158.4 109.6M157.9 123.9L157.3 118.0M157.3 118.0L155.3 114.8M155.3 114.8L154.3 112.5M154.3 112.5L153.2 111.4M154.3 112.5L153.2 111.4M155.3 114.8L153.1 113.4M153.1 113.4L151.4 112.7M153.1 113.4L151.5 112.8M157.3 118.0L158.3 114.8M158.3 114.8L159.2 113.1M158.3 114.8L158.9 113.2M157.6 133.7L162.5 127.0M162.5 127.0L164.8 123.1M164.8 123.1L166.3 121.1M166.3 121.1L167.4 119.8M164.8 123.1L165.0 120.6M165.0 120.6L165.2 118.9M165.0 120.6L164.4 119.2M162.5 127.0L165.3 123.1M165.3 123.1L167.3 121.2M167.3 121.2L168.6 119.6M167.3 121.2L169.2 120.7M165.3 123.1L168.0 122.0M168.0 122.0L169.3 120.4M168.0 122.0L169.9 121.5M164.7 146.2L164.7 129.9M164.7 129.9L168.9 119.9M168.9 119.9L172.3 114.0M172.3 114.0L173.3 110.2M173.3 110.2L173.8 108.2M173.3 110.2L175.4 108.3M175.4 108.3L176.1 106.8M175.4 108.3L176.2 106.8M175.4 108.3L176.5 106.8M172.3 114.0L173.3 110.1M173.3 110.1L174.1 107.9M173.3 110.1L173.2 107.5M173.2 107.5L172.2 106.1M173.2 107.5L173.0 106.0M173.2 107.5L172.2 106.2M168.9 119.9L173.9 116.5M173.9 116.5L175.9 112.7M175.9 112.7L176.9 109.7M176.9 109.7L178.3 108.5M176.9 109.7L178.4 108.3M176.9 109.7L178.0 108.5M175.9 112.7L177.8 110.8M177.8 110.8L179.5 110.0M173.9 116.5L177.8 115.1M177.8 115.1L179.4 113.3M179.4 113.3L180.1 111.8M179.4 113.3L179.9 111.8M179.4 113.3L180.9 112.7M177.8 115.1L179.4 113.7M164.7 129.9L170.9 120.2M170.9 120.2L173.5 114.9M173.5 114.9L174.6 111.0M174.6 111.0L176.3 108.8M176.3 108.8L177.8 107.9M176.3 108.8L177.4 107.4M176.3 108.8L176.4 107.1M174.6 111.0L176.2 108.7M176.2 108.7L176.8 107.2M176.2 108.7L176.4 106.8M176.2 108.7L177.4 107.6M173.5 114.9L176.4 113.2M176.4 113.2L178.4 111.8M178.4 111.8L179.5 110.6M178.4 111.8L179.9 111.8M178.4 111.8L180.0 111.4M176.4 113.2L178.2 111.8M178.2 111.8L179.6 111.1M170.9 120.2L175.7 114.9M175.7 114.9L179.1 113.1M179.1 113.1L181.6 112.3M181.6 112.3L182.8 111.1M181.6 112.3L183.3 112.0M179.1 113.1L181.2 112.5M175.7 114.9L179.2 113.1M179.2 113.1L181.3 111.1M181.3 111.1L181.9 109.2M181.3 111.1L181.9 109.6M179.2 113.1L181.5 112.0M181.5 112.0L183.0 111.5M181.5 112.0L182.7 111.2M167.0 145.4L165.5 125.6M165.5 125.6L161.9 115.3M161.9 115.3L158.8 108.7M158.8 108.7L156.4 104.9M156.4 104.9L155.8 102.5M155.8 102.5L155.7 101.0M156.4 104.9L156.5 102.5M156.5 102.5L156.3 100.9M158.8 108.7L155.7 105.1M155.7 105.1L153.1 103.5M153.1 103.5L151.3 102.2M153.1 103.5L151.4 103.5M153.1 103.5L151.6 102.2M155.7 105.1L154.2 102.2M154.2 102.2L153.9 100.3M154.2 102.2L152.8 101.2M154.2 102.2L153.9 100.3M161.9 115.3L158.6 109.2M158.6 109.2L156.7 106.2M156.7 106.2L155.1 104.4M155.1 104.4L154.0 103.3M156.7 106.2L155.5 104.6M158.6 109.2L156.6 104.8M156.6 104.8L157.0 102.1M157.0 102.1L158.0 100.9M157.0 102.1L156.9 100.4M156.6 104.8L155.1 102.6M155.1 102.6L153.8 101.4M155.1 102.6L154.5 101.1M165.5 125.6L166.9 112.5M166.9 112.5L167.8 105.1M167.8 105.1L167.4 100.2M167.4 100.2L168.8 97.3M168.8 97.3L168.7 95.7M168.8 97.3L169.9 96.0M168.8 97.3L170.3 96.1M167.4 100.2L167.5 97.5M167.5 97.5L167.1 95.7M167.5 97.5L167.0 95.9M167.8 105.1L167.1 100.6M167.1 100.6L167.4 97.9M167.4 97.9L168.4 96.5M167.4 97.9L168.1 96.4M167.4 97.9L167.3 96.4M167.1 100.6L166.9 98.2M166.9 98.2L167.5 96.7M166.9 112.5L165.4 104.8M165.4 104.8L162.7 100.9M162.7 100.9L161.7 97.8M161.7 97.8L162.2 96.0M161.7 97.8L162.2 96.1M161.7 97.8L161.5 95.7M162.7 100.9L160.5 99.8M160.5 99.8L159.3 98.6M160.5 99.8L158.9 99.8M165.4 104.8L164.3 100.4M164.3 100.4L163.4 97.6M163.4 97.6L163.0 95.8M163.4 97.6L162.3 96.6M163.4 97.6L163.9 95.7M164.3 100.4L164.1 97.9M164.1 97.9L163.4 96.5M164.1 97.9L164.6 96.5M174.4 144.8L175.7 128.1M175.7 128.1L182.6 118.3M182.6 118.3L186.9 113.9M186.9 113.9L190.0 112.4M190.0 112.4L191.6 110.5M191.6 110.5L193.3 109.8M190.0 112.4L191.5 110.6M191.5 110.6L191.9 109.1M186.9 113.9L190.6 111.7M190.6 111.7L193.4 111.5M193.4 111.5L194.9 111.7M193.4 111.5L195.2 110.8M193.4 111.5L195.2 111.3M190.6 111.7L192.9 109.9M192.9 109.9L194.5 109.0M192.9 109.9L193.6 108.3M192.9 109.9L194.5 108.8M182.6 118.3L189.0 115.7M189.0 115.7L192.4 113.8M192.4 113.8L194.7 113.6M194.7 113.6L196.3 113.5M194.7 113.6L196.2 113.2M192.4 113.8L194.3 111.8M194.3 111.8L195.4 110.3M194.3 111.8L194.7 110.3M194.3 111.8L195.3 110.2M189.0 115.7L193.6 115.8M193.6 115.8L196.3 114.9M196.3 114.9L197.4 113.9M196.3 114.9L197.7 114.4M196.3 114.9L197.6 114.0M193.6 115.8L196.8 115.9M196.8 115.9L198.7 116.2M196.8 115.9L198.8 115.1M196.8 115.9L198.3 115.5M175.7 128.1L175.1 117.1M175.1 117.1L177.8 110.8M177.8 110.8L177.6 106.1M177.6 106.1L176.3 103.4M176.3 103.4L174.9 102.1M176.3 103.4L176.1 101.8M176.3 103.4L175.2 101.8M177.6 106.1L177.0 103.2M177.0 103.2L176.3 101.3M177.0 103.2L177.4 101.7M177.0 103.2L176.4 101.3M177.8 110.8L177.7 107.0M177.7 107.0L178.4 105.2M177.7 107.0L177.7 104.6M177.7 104.6L176.9 103.2M177.7 104.6L177.3 103.0M177.7 104.6L176.9 103.2M175.1 117.1L176.8 111.9M176.8 111.9L175.9 108.6M175.9 108.6L175.0 106.5M175.9 108.6L175.1 106.7M176.8 111.9L178.5 109.5M178.5 109.5L179.7 108.1M178.5 109.5L179.1 107.7"/></g>
<path d="M80 154c15-8 40-10 60-6c20 3 35 0 49-4v10z" fill="#f6f6f6"/><path d="M88 146c8-3 16-2 22 0M120 148c10-3 20-2 30 0" stroke="#fafafa" stroke-width="2" fill="none"/>
</g>
<g fill="none" stroke="#f0a8a4" stroke-width="2.3" stroke-linejoin="miter">
<path d="M116 50l-8 4l12.7 34l7-4"/>
<path d="M159.7 36.7l6.7-2.7l10 38.4l-5.6 3.6"/>
<path d="M148.6 11l-1.1 16.8l6.5 0.2"/>
</g>
<g fill="none" stroke="#0e0e0e" stroke-linecap="round">
<path d="M129 79c1 6 3 10 8 15c5 5 10 7 17 8c7 2 12 8 17 16" stroke-width="2.6"/>
<path d="M170 120c-6-6-13-18-17-35" stroke-width="2.2"/>
<path d="M153 85c-6-8-9-20-7-28c1-5 3-7 6-7" stroke-width="1.8"/>
<path d="M153 85c4-6 7-12 8-19c1-4 1-7 1.5-9" stroke-width="1.6"/>
<path d="M172 122c4-8 8-18 10-28c2-12 2-26-5-40c-2-6-2-14 0-19" stroke-width="3"/>
<path d="M182 60c3-2 5-3 7-3" stroke-width="2.5"/>
<path d="M175.5 34c-5-4-9-8-11-14c-1-3 0-5 2-5" stroke-width="1.4"/>
<path d="M177 33c3-2 6-4 7-8c1-2 1-3 1-4" stroke-width="1.4"/>
</g>
<path d="M169.5 154v-36h5.8v36z" fill="#0e0e0e"/>
<circle cx="129" cy="75" r="4.6" fill="#f4f4f4" stroke="#222" stroke-width="0.9"/>
<path d="M127 76l4-2" stroke="#3a8a3a" stroke-width="1.5"/>
<circle cx="163.5" cy="53.5" r="4" fill="#f0e8ec" stroke="#666" stroke-width="0.7"/>
<circle cx="167.5" cy="15.6" r="3.6" fill="#eee" stroke="#777" stroke-width="0.7"/>
<circle cx="185.5" cy="21" r="3.5" fill="#f4f4f4" stroke="#777" stroke-width="0.7"/>
<rect y="154" width="189" height="10" fill="url(#i2b)"/>
<path d="M67 161.5l3-2v4zM120 161.5l-3-2v4z" fill="#aaa"/>
</svg>
<svg style="left:723px;top:322px" width="42" height="42">
<defs><linearGradient id="wb723322" x1="0" y1="0" x2="0" y2="1"><stop offset="0" stop-color="#c4e6f6"/><stop offset="1" stop-color="#86c6ea"/></linearGradient>
<radialGradient id="wo723322" cx="0.4" cy="0.3" r="0.8"><stop offset="0" stop-color="#fca040"/><stop offset="1" stop-color="#ea6510"/></radialGradient></defs>
<filter id="ws723322" x="-50%" y="-50%" width="200%" height="200%"><feGaussianBlur stdDeviation="1.2"/></filter>
<path d="M2 37.5l34 1l4-2v2l-4 2.5l-34-1z" fill="#000" opacity="0.18" filter="url(#ws723322)"/>
<path d="M36 2.5h2.5v35h-2.5z" fill="#9fd2ee" stroke="#4ea3d8" stroke-width="0.8"/>
<path d="M32.5 1.5h3v37h-3z" fill="#aedaf2" stroke="#4ea3d8" stroke-width="0.8"/>
<path d="M0.5 0.5h31.5v37.5l-31.5 -1z" fill="url(#wb723322)" stroke="#4ea3d8" stroke-width="1"/>
<ellipse cx="15.5" cy="18" rx="12.3" ry="14.2" fill="url(#wo723322)"/>
<path d="M10.6 10.2L10.6 26L23.2 18.2Z" fill="#fff" stroke="#fff" stroke-width="2" stroke-linejoin="round"/>
</svg>
<div class=a style='left:214px;top:510px;width:194px;height:136.5px;background:#2b2b2b'></div>
<div class=a style='left:187px;top:510px;width:27px;height:136.5px;background:#808080'></div>
<div class=a style='left:193px;top:517.1px;width:16px;height:14px;background:#fff'></div>
<div class=a style='left:193px;top:544.1px;width:16px;height:14px;background:#fff'></div>
<div class=a style='left:193px;top:571.1px;width:16px;height:14px;background:#fff'></div>
<div class=a style='left:193px;top:598.1px;width:16px;height:14px;background:#fff'></div>
<div class=a style='left:193px;top:625.1px;width:16px;height:14px;background:#fff'></div>
<div class=a style='left:408px;top:510px;width:27px;height:136.5px;background:#808080'></div>
<div class=a style='left:414px;top:517.1px;width:16px;height:14px;background:#fff'></div>
<div class=a style='left:414px;top:544.1px;width:16px;height:14px;background:#fff'></div>
<div class=a style='left:414px;top:571.1px;width:16px;height:14px;background:#fff'></div>
<div class=a style='left:414px;top:598.1px;width:16px;height:14px;background:#fff'></div>
<div class=a style='left:414px;top:625.1px;width:16px;height:14px;background:#fff'></div>
<svg style="left:217px;top:517px" width="188" height="123">
<rect width="188" height="123" fill="#fff"/>
<rect width="188" height="26" fill="#f7f7f7"/>
<rect y="26" width="188" height="1" fill="#d6d6d6"/>
<g fill="#d8e0ea"><rect x="2" y="2" width="6" height="8"/><rect x="12" y="1" width="8" height="8"/><rect x="24" y="2" width="8" height="8"/><rect x="64" y="2" width="8" height="8"/><rect x="80" y="3" width="8" height="8"/><rect x="104" y="2" width="6" height="8"/><rect x="122" y="2" width="8" height="8"/><rect x="156" y="2" width="8" height="8"/><rect x="183" y="2" width="5" height="8"/></g>
<g stroke="#7a7a7a" stroke-width="0.9"><path d="M12 13h10M12 16h10M26 13h6M38 2h12M38 6h10M38 10h14M62 13h12M64 16h8M80 13h10M100 13h6M116 13h12M116 16h10M134 2h14M134 6h12M134 10h16M158 13h8M160 16h6M166 2h16M166 6h14M166 10h14M20 21h14M58 21h8M78 21h8M116 21h12M136 21h18M168 21h8"/></g>
<path d="M34 0v24M58 0v24M75 0v24M94 0v24M112 0v24M130 0v24M155 0v24" stroke="#e0e0e0" stroke-width="0.6"/>
<circle cx="53.5" cy="13.5" r="6.5" fill="#f4ee70" opacity="0.75"/>
<path d="M11 49v7" stroke="#555" stroke-width="0.6"/>
</svg>
<svg style="left:395px;top:614.5px" width="42" height="42">
<defs><linearGradient id="wb395614.5" x1="0" y1="0" x2="0" y2="1"><stop offset="0" stop-color="#c4e6f6"/><stop offset="1" stop-color="#86c6ea"/></linearGradient>
<radialGradient id="wo395614.5" cx="0.4" cy="0.3" r="0.8"><stop offset="0" stop-color="#fca040"/><stop offset="1" stop-color="#ea6510"/></radialGradient></defs>
<filter id="ws395614.5" x="-50%" y="-50%" width="200%" height="200%"><feGaussianBlur stdDeviation="1.2"/></filter>
<path d="M2 37.5l34 1l4-2v2l-4 2.5l-34-1z" fill="#000" opacity="0.18" filter="url(#ws395614.5)"/>
<path d="M36 2.5h2.5v35h-2.5z" fill="#9fd2ee" stroke="#4ea3d8" stroke-width="0.8"/>
<path d="M32.5 1.5h3v37h-3z" fill="#aedaf2" stroke="#4ea3d8" stroke-width="0.8"/>
<path d="M0.5 0.5h31.5v37.5l-31.5 -1z" fill="url(#wb395614.5)" stroke="#4ea3d8" stroke-width="1"/>
<ellipse cx="15.5" cy="18" rx="12.3" ry="14.2" fill="url(#wo395614.5)"/>
<path d="M10.6 10.2L10.6 26L23.2 18.2Z" fill="#fff" stroke="#fff" stroke-width="2" stroke-linejoin="round"/>
</svg>
<div class=a style='left:543px;top:510px;width:194px;height:136.5px;background:#2b2b2b'></div>
<div class=a style='left:516px;top:510px;width:27px;height:136.5px;background:#808080'></div>
<div class=a style='left:522px;top:517.1px;width:16px;height:14px;background:#fff'></div>
<div class=a style='left:522px;top:544.1px;width:16px;height:14px;background:#fff'></div>
<div class=a style='left:522px;top:571.1px;width:16px;height:14px;background:#fff'></div>
<div class=a style='left:522px;top:598.1px;width:16px;height:14px;background:#fff'></div>
<div class=a style='left:522px;top:625.1px;width:16px;height:14px;background:#fff'></div>
<div class=a style='left:737px;top:510px;width:27px;height:136.5px;background:#808080'></div>
<div class=a style='left:743px;top:517.1px;width:16px;height:14px;background:#fff'></div>
<div class=a style='left:743px;top:544.1px;width:16px;height:14px;background:#fff'></div>
<div class=a style='left:743px;top:571.1px;width:16px;height:14px;background:#fff'></div>
<div class=a style='left:743px;top:598.1px;width:16px;height:14px;background:#fff'></div>
<div class=a style='left:743px;top:625.1px;width:16px;height:14px;background:#fff'></div>
<svg style="left:546px;top:517px" width="188" height="122.5">
<defs><linearGradient id="i4" x1="0" y1="0" x2="0.3" y2="1"><stop offset="0" stop-color="#2a88e6"/><stop offset="1" stop-color="#5ab6f4"/></linearGradient>
<radialGradient id="i4g" cx="0.3" cy="0.95" r="0.6"><stop offset="0" stop-color="#8ad0f8" stop-opacity="0.55"/><stop offset="1" stop-color="#8ad0f8" stop-opacity="0"/></radialGradient>
<radialGradient id="i4y" cx="0.45" cy="0.45" r="0.55"><stop offset="0" stop-color="#e8c020"/><stop offset="1" stop-color="#c8a010"/></radialGradient>
<filter id="bl" x="-50%" y="-50%" width="200%" height="200%"><feGaussianBlur stdDeviation="1.4"/></filter>
<filter id="bl2"><feGaussianBlur stdDeviation="0.45"/></filter></defs>
<rect width="188" height="122.5" fill="url(#i4)"/>
<rect width="188" height="122.5" fill="url(#i4g)"/>
<path d="M40 122.5c2-20 8-32 16-40" fill="none" stroke="#7cc8ee" stroke-width="3" opacity="0.6" filter="url(#bl2)"/>
<path d="M86 122.5c14-12 30-22 40-28" fill="none" stroke="#5ad0d0" stroke-width="2.5" opacity="0.7" filter="url(#bl2)"/>
<g fill="#f4f8fc" filter="url(#bl)" opacity="0.85">
<ellipse cx="157.4" cy="64.1" rx="3.6" ry="11.4" transform="rotate(86.9 157.4 64.1)"/>
<ellipse cx="155.9" cy="72.3" rx="3.6" ry="11.6" transform="rotate(116.1 155.9 72.3)"/>
<ellipse cx="149.0" cy="77.3" rx="3.6" ry="9.7" transform="rotate(146.9 149.0 77.3)"/>
<ellipse cx="144.9" cy="82.0" rx="3.6" ry="12.4" transform="rotate(167.2 144.9 82.0)"/>
<ellipse cx="136.3" cy="79.6" rx="3.6" ry="10.3" transform="rotate(197.9 136.3 79.6)"/>
<ellipse cx="127.9" cy="74.4" rx="3.6" ry="11.1" transform="rotate(234.4 127.9 74.4)"/>
<ellipse cx="125.1" cy="67.8" rx="3.6" ry="11.2" transform="rotate(260.2 125.1 67.8)"/>
<ellipse cx="126.5" cy="61.0" rx="3.6" ry="10.0" transform="rotate(285.5 126.5 61.0)"/>
<ellipse cx="128.2" cy="53.0" rx="3.6" ry="12.5" transform="rotate(313.2 128.2 53.0)"/>
<ellipse cx="135.0" cy="49.0" rx="3.6" ry="12.1" transform="rotate(339.5 135.0 49.0)"/>
<ellipse cx="143.3" cy="50.5" rx="3.6" ry="9.7" transform="rotate(369.0 143.3 50.5)"/>
<ellipse cx="151.1" cy="51.9" rx="3.6" ry="11.6" transform="rotate(397.7 151.1 51.9)"/>
<ellipse cx="153.6" cy="57.7" rx="3.6" ry="9.6" transform="rotate(419.9 153.6 57.7)"/>
</g>
<ellipse cx="141" cy="65" rx="4.5" ry="7" transform="rotate(-20 141 65)" fill="#e8a030" filter="url(#bl)"/>
<g fill="#fbfdff" filter="url(#bl2)">
<ellipse cx="54.7" cy="25.6" rx="3.4" ry="17.2" transform="rotate(-25.3 54.7 25.6)" opacity="1"/>
<ellipse cx="62.1" cy="24.6" rx="3.4" ry="16.0" transform="rotate(-8.0 62.1 24.6)" opacity="1"/>
<ellipse cx="72.9" cy="23.7" rx="3.4" ry="17.8" transform="rotate(16.6 72.9 23.7)" opacity="1"/>
<ellipse cx="82.5" cy="26.1" rx="3.4" ry="20.1" transform="rotate(37.3 82.5 26.1)" opacity="1"/>
<ellipse cx="87.5" cy="32.9" rx="3.4" ry="18.9" transform="rotate(54.9 87.5 32.9)" opacity="1"/>
<ellipse cx="88.7" cy="40.1" rx="3.4" ry="16.7" transform="rotate(70.3 88.7 40.1)" opacity="1"/>
<ellipse cx="93.8" cy="48.7" rx="3.4" ry="20.3" transform="rotate(90.7 93.8 48.7)" opacity="1"/>
<ellipse cx="92.4" cy="54.5" rx="3.4" ry="19.5" transform="rotate(102.8 92.4 54.5)" opacity="1"/>
<ellipse cx="90.5" cy="63.2" rx="3.4" ry="21.1" transform="rotate(120.7 90.5 63.2)" opacity="0.95"/>
<ellipse cx="86.5" cy="67.4" rx="3.4" ry="20.3" transform="rotate(132.1 86.5 67.4)" opacity="0.95"/>
<ellipse cx="74.5" cy="74.1" rx="3.4" ry="19.2" transform="rotate(160.7 74.5 74.1)" opacity="0.7"/>
<ellipse cx="64.6" cy="75.0" rx="3.4" ry="18.6" transform="rotate(181.9 64.6 75.0)" opacity="0.6"/>
<ellipse cx="58.9" cy="73.5" rx="3.4" ry="17.9" transform="rotate(194.8 58.9 73.5)" opacity="0.6"/>
<ellipse cx="45.6" cy="53.1" rx="3.4" ry="12.4" transform="rotate(256.6 45.6 53.1)" opacity="0.9"/>
<ellipse cx="47.3" cy="44.3" rx="3.4" ry="10.6" transform="rotate(-77.3 47.3 44.3)" opacity="0.95"/>
<ellipse cx="50.0" cy="34.2" rx="3.4" ry="13.0" transform="rotate(-47.5 50.0 34.2)" opacity="1"/>
</g>
<circle cx="65.5" cy="48.4" r="14.5" fill="url(#i4y)"/>
<circle cx="65.5" cy="48.4" r="14.5" fill="none" stroke="#b89010" stroke-width="0.6" opacity="0.5"/>
</svg>
<svg style="left:723.5px;top:614.5px" width="42" height="42">
<defs><linearGradient id="wb723.5614.5" x1="0" y1="0" x2="0" y2="1"><stop offset="0" stop-color="#c4e6f6"/><stop offset="1" stop-color="#86c6ea"/></linearGradient>
<radialGradient id="wo723.5614.5" cx="0.4" cy="0.3" r="0.8"><stop offset="0" stop-color="#fca040"/><stop offset="1" stop-color="#ea6510"/></radialGradient></defs>
<filter id="ws723.5614.5" x="-50%" y="-50%" width="200%" height="200%"><feGaussianBlur stdDeviation="1.2"/></filter>
<path d="M2 37.5l34 1l4-2v2l-4 2.5l-34-1z" fill="#000" opacity="0.18" filter="url(#ws723.5614.5)"/>
<path d="M36 2.5h2.5v35h-2.5z" fill="#9fd2ee" stroke="#4ea3d8" stroke-width="0.8"/>
<path d="M32.5 1.5h3v37h-3z" fill="#aedaf2" stroke="#4ea3d8" stroke-width="0.8"/>
<path d="M0.5 0.5h31.5v37.5l-31.5 -1z" fill="url(#wb723.5614.5)" stroke="#4ea3d8" stroke-width="1"/>
<ellipse cx="15.5" cy="18" rx="12.3" ry="14.2" fill="url(#wo723.5614.5)"/>
<path d="M10.6 10.2L10.6 26L23.2 18.2Z" fill="#fff" stroke="#fff" stroke-width="2" stroke-linejoin="round"/>
</svg>
<div class=a style='left:872px;top:510px;width:191px;height:136.5px;background:#2b2b2b'></div>
<div class=a style='left:845px;top:510px;width:27px;height:136.5px;background:#808080'></div>
<div class=a style='left:851px;top:517.1px;width:16px;height:14px;background:#fff'></div>
<div class=a style='left:851px;top:544.1px;width:16px;height:14px;background:#fff'></div>
<div class=a style='left:851px;top:571.1px;width:16px;height:14px;background:#fff'></div>
<div class=a style='left:851px;top:598.1px;width:16px;height:14px;background:#fff'></div>
<div class=a style='left:851px;top:625.1px;width:16px;height:14px;background:#fff'></div>
<div class=a style='left:1064px;top:510px;width:29px;height:136.5px;background:#808080'></div>
<svg style="left:875px;top:517px" width="188" height="123">
<defs><linearGradient id="i5" x1="0" y1="0" x2="1" y2="1"><stop offset="0" stop-color="#4aa2e6"/><stop offset="1" stop-color="#6ab8f0"/></linearGradient></defs>
<rect width="188" height="123" fill="url(#i5)"/>
<rect x="2" y="96" width="168" height="2" fill="#f0f4f8"/>
<rect x="2" y="98" width="168" height="5" fill="#1c3f94"/>
<path d="M6 100.5h12M22 100.5h14M120 100.5h4M128 100.5h4M136 100.5h30" stroke="#8aa0d8" stroke-width="1"/>
<path d="M20 123l14-20M50 123l8-20M110 123l10-20" stroke="#8ccaf4" stroke-width="3" opacity="0.35"/>
<circle cx="89" cy="113" r="4.5" fill="#a0d888" opacity="0.9"/>
</svg>
<svg style="left:1053px;top:614.5px" width="42" height="42">
<defs><linearGradient id="wb1053614.5" x1="0" y1="0" x2="0" y2="1"><stop offset="0" stop-color="#c4e6f6"/><stop offset="1" stop-color="#86c6ea"/></linearGradient>
<radialGradient id="wo1053614.5" cx="0.4" cy="0.3" r="0.8"><stop offset="0" stop-color="#fca040"/><stop offset="1" stop-color="#ea6510"/></radialGradient></defs>
<filter id="ws1053614.5" x="-50%" y="-50%" width="200%" height="200%"><feGaussianBlur stdDeviation="1.2"/></filter>
<path d="M2 37.5l34 1l4-2v2l-4 2.5l-34-1z" fill="#000" opacity="0.18" filter="url(#ws1053614.5)"/>
<path d="M36 2.5h2.5v35h-2.5z" fill="#9fd2ee" stroke="#4ea3d8" stroke-width="0.8"/>
<path d="M32.5 1.5h3v37h-3z" fill="#aedaf2" stroke="#4ea3d8" stroke-width="0.8"/>
<path d="M0.5 0.5h31.5v37.5l-31.5 -1z" fill="url(#wb1053614.5)" stroke="#4ea3d8" stroke-width="1"/>
<ellipse cx="15.5" cy="18" rx="12.3" ry="14.2" fill="url(#wo1053614.5)"/>
<path d="M10.6 10.2L10.6 26L23.2 18.2Z" fill="#fff" stroke="#fff" stroke-width="2" stroke-linejoin="round"/>
</svg><!-- dialog -->
<div class=a style="left:778px;top:104px;width:363px;height:509px;background:#f0f0f0;border:1px solid #0063b1"></div>
<div class=a style="left:778px;top:104px;width:363px;height:31px;background:#0063b1"></div>
<svg style="left:1120px;top:114px" width="11" height="11"><path d="M0.5 0.5L10 10M10 0.5L0.5 10" stroke="#fff" stroke-width="1.1"/></svg>
<svg style="left:789px;top:112px" width="12" height="15">
  <path d="M0.5 0.5h8l3 3v11h-11z" fill="#fff" stroke="#d8c8b0" stroke-width="0.8"/>
  <rect x="1.5" y="4" width="9" height="7" fill="#1a7ad8"/>
  <rect x="1.5" y="4" width="9" height="2" fill="#5ac8f8"/>
  <path d="M4.5 6.5v3.5l3-1.75z" fill="#fff"/>
</svg>
<!-- tabs -->
<div class=a style="left:787px;top:144px;width:49px;height:19px;border:1px solid #d9d9d9;border-bottom:none;background:#f0f0f0"></div>
<div class=a style="left:835px;top:144px;width:50px;height:19px;border:1px solid #d9d9d9;border-bottom:none;background:#f0f0f0"></div>
<div class=a style="left:931px;top:144px;width:93px;height:19px;border:1px solid #d9d9d9;border-bottom:none;background:#f0f0f0"></div>
<div class=a style="left:785px;top:162px;width:347px;height:412px;border:1px solid #d9d9d9;background:#fff"></div>
<div class=a style="left:884px;top:142px;width:48px;height:22px;border:1px solid #d9d9d9;border-bottom:none;background:#fff"></div>
<!-- list box -->
<div class=a style="left:800px;top:175px;width:318px;height:358px;border:1px solid #828790;background:#fff"></div>
<div class=a style="left:894px;top:177px;width:1px;height:23px;background:#e5e5e5"></div>
<div class=a style="left:1081px;top:177px;width:1px;height:23px;background:#e5e5e5"></div>
<div class=a style="left:848px;top:215px;width:241px;height:1px;background:#b9c6e6"></div>
<div class=a style="left:850px;top:401px;width:239px;height:1px;background:#b9c6e6"></div>
<div class=a style="left:836px;top:479px;width:253px;height:1px;background:#b9c6e6"></div>
<div class=a style="left:1100px;top:177px;width:16px;height:355px;background:#f0f0f0"></div>
<div class=a style="left:1100px;top:224px;width:15px;height:180px;background:#cdcdcd"></div>
<svg style="left:1100px;top:177px" width="16" height="355">
  <path d="M4.4 11.2L7.5 7.4L10.6 11.2" fill="none" stroke="#505050" stroke-width="2.1"/>
  <path d="M4.4 342.8L7.5 346.6L10.6 342.8" fill="none" stroke="#505050" stroke-width="2.1"/>
</svg>
<!-- buttons -->
<div class=a style="left:898px;top:583px;width:73px;height:21px;border:2px solid #0078d7;background:#e1e1e1"></div>
<div class=a style="left:979px;top:583px;width:73px;height:21px;border:1px solid #adadad;background:#e1e1e1"></div>
<div class=a style="left:1060px;top:583px;width:73px;height:21px;border:1px solid #bfbfbf;background:#cccccc"></div>
<div class=t style='left:267.62px;top:9.54px;font-size:12px;color:#3c3c3c;transform:scaleX(0.8773);'>Play</div>
<div class=t style='left:335.74px;top:7.64px;font-size:12px;color:#9a9a9a;transform:scaleX(0.8600);'>FPPT</div>
<div class=t style='left:22.42px;top:34.64px;font-size:12px;color:#fff;transform:scaleX(0.9778);'>File</div>
<div class=t style='left:73.36px;top:34.64px;font-size:12px;color:#2b2b2b;transform:scaleX(0.9419);'>Home</div>
<div class=t style='left:132.29px;top:34.64px;font-size:12px;color:#2b2b2b;transform:scaleX(0.9129);'>Share</div>
<div class=t style='left:190.80px;top:34.64px;font-size:12px;color:#2b2b2b;transform:scaleX(0.9692);'>View</div>
<div class=t style='left:247.40px;top:34.34px;font-size:12px;color:#2b2b2b;transform:scaleX(0.9656);'>Video Tools</div>
<div class=t style='left:149.33px;top:66.84px;font-size:12px;color:#000;transform:scaleX(0.8700);'>FPPT</div>
<div class=t style='left:922.19px;top:66.64px;font-size:12px;color:#6d6d6d;transform:scaleX(0.9056);'>Search FPPT</div>
<div class=t style='left:49.40px;top:116.54px;font-size:12px;color:#000;transform:scaleX(0.9479);'>Quick access</div>
<div class=t style='left:49.40px;top:148.34px;font-size:12px;color:#000;transform:scaleX(0.9630);'>OneDrive - Personal</div>
<div class=t style='left:49.40px;top:180.24px;font-size:12px;color:#000;transform:scaleX(0.9095);'>This PC</div>
<div class=t style='left:56.33px;top:204.64px;font-size:12px;color:#000;transform:scaleX(0.9724);'>3D Objects</div>
<div class=t style='left:56.32px;top:228.24px;font-size:12px;color:#000;transform:scaleX(0.9791);'>Desktop</div>
<div class=t style='left:56.28px;top:252.34px;font-size:12px;color:#000;transform:scaleX(1.0203);'>Documents</div>
<div class=t style='left:56.29px;top:276.24px;font-size:12px;color:#000;transform:scaleX(1.0069);'>Downloads</div>
<div class=t style='left:56.57px;top:300.84px;font-size:12px;color:#000;transform:scaleX(1.0267);'>Music</div>
<div class=t style='left:56.62px;top:324.84px;font-size:12px;color:#000;transform:scaleX(0.9833);'>Pictures</div>
<div class=t style='left:57.60px;top:348.84px;font-size:12px;color:#000;transform:scaleX(0.9556);'>Videos</div>
<div class=t style='left:56.64px;top:372.84px;font-size:12px;color:#000;transform:scaleX(0.9610);'>Local Disk (C:)</div>
<div class=t style='left:56.61px;top:396.84px;font-size:12px;color:#000;transform:scaleX(0.9888);'>New Volume (D:)</div>
<div class=t style='left:48.58px;top:428.84px;font-size:12px;color:#000;transform:scaleX(1.0233);'>Network</div>
<div class=t style='left:290.47px;top:360.74px;font-size:12px;color:#000;transform:scaleX(1.0295);'>Clock.flv</div>
<div class=t style='left:527.03px;top:360.54px;font-size:12px;color:#000;transform:scaleX(0.9745);'>Download Free PowerPoint Presentations at</div>
<div class=t style='left:620.66px;top:374.84px;font-size:12px;color:#000;transform:scaleX(0.9409);'>FPPT.flv</div>
<div class=t style='left:195.74px;top:652.64px;font-size:12px;color:#000;transform:scaleX(0.9596);'>How Take Screenshots In MS Word 2013.mp4</div>
<div class=t style='left:533.29px;top:652.64px;font-size:12px;color:#000;transform:scaleX(1.0074);'>How To Activate Microsoft Office 2013.flv</div>
<div class=t style='left:859.91px;top:652.64px;font-size:12px;color:#000;transform:scaleX(0.9866);'>How To Add YouTube Videos To MS Office</div>
<div class=t style='left:950.36px;top:667.34px;font-size:12px;color:#000;transform:scaleX(0.9390);'>2013.flv</div>
<div class=t style='left:17.92px;top:693.74px;font-size:12px;color:#1a1a1a;transform:scaleX(0.9750);'>10 items</div>
<div class=t style='left:83.03px;top:693.74px;font-size:12px;color:#1a1a1a;transform:scaleX(0.9722);'>1 item selected</div>
<div class=t style='left:167.80px;top:693.74px;font-size:12px;color:#1a1a1a;transform:scaleX(0.9341);'>465 MB</div>
<div class=t style='left:807.94px;top:109.74px;font-size:12px;color:#fff;transform:scaleX(0.9649);'>FPPT.mkv Properties</div>
<div class=t style='left:791.81px;top:143.84px;font-size:12px;color:#000;transform:scaleX(0.8902);'>General</div>
<div class=t style='left:841.41px;top:143.84px;font-size:12px;color:#000;transform:scaleX(0.8857);'>Security</div>
<div class=t style='left:891.30px;top:141.64px;font-size:12px;color:#000;transform:scaleX(0.9000);'>Details</div>
<div class=t style='left:935.53px;top:143.84px;font-size:12px;color:#000;transform:scaleX(0.8695);'>Previous Versions</div>
<div class=t style='left:807.54px;top:178.94px;font-size:12px;color:#000;transform:scaleX(0.8614);'>Property</div>
<div class=t style='left:901.40px;top:178.94px;font-size:12px;color:#000;transform:scaleX(0.8533);'>Value</div>
<div class=t style='left:814.30px;top:205.74px;font-size:12px;color:#1e3287;transform:scaleX(0.9700);'>Video</div>
<div class=t style='left:814.60px;top:391.74px;font-size:12px;color:#1e3287;transform:scaleX(1.0333);'>Audio</div>
<div class=t style='left:813.65px;top:469.74px;font-size:12px;color:#1e3287;transform:scaleX(0.9500);'>File</div>
<div class=t style='left:807.50px;top:225.84px;font-size:12px;color:#000;transform:scaleX(0.9029);'>Length</div>
<div class=t style='left:901.40px;top:225.84px;font-size:12px;color:#000;transform:scaleX(0.9043);'>01:03:37</div>
<div class=t style='left:807.53px;top:243.84px;font-size:12px;color:#000;transform:scaleX(0.8672);'>Frame width</div>
<div class=t style='left:900.48px;top:243.84px;font-size:12px;color:#000;transform:scaleX(0.9240);'>1280</div>
<div class=t style='left:807.55px;top:261.84px;font-size:12px;color:#000;transform:scaleX(0.8529);'>Frame height</div>
<div class=t style='left:900.49px;top:261.84px;font-size:12px;color:#000;transform:scaleX(0.9053);'>640</div>
<div class=t style='left:808.40px;top:279.84px;font-size:12px;color:#000;transform:scaleX(0.8823);'>Total bitrate</div>
<div class=t style='left:900.50px;top:279.84px;font-size:12px;color:#000;transform:scaleX(0.8980);'>1022kbps</div>
<div class=t style='left:807.54px;top:297.64px;font-size:12px;color:#000;transform:scaleX(0.8561);'>Frame rate</div>
<div class=t style='left:900.50px;top:297.64px;font-size:12px;color:#000;transform:scaleX(0.8991);'>23.98 frames/second</div>
<div class=t style='left:808.40px;top:315.64px;font-size:12px;color:#000;transform:scaleX(0.8846);'>Video tracks</div>
<div class=t style='left:900.50px;top:315.64px;font-size:12px;color:#000;transform:scaleX(0.8951);'>H264 (High @L3.1)</div>
<div class=t style='left:807.52px;top:333.44px;font-size:12px;color:#000;transform:scaleX(0.8821);'>Contains chapters</div>
<div class=t style='left:900.51px;top:333.44px;font-size:12px;color:#000;transform:scaleX(0.8929);'>No</div>
<div class=t style='left:808.40px;top:351.24px;font-size:12px;color:#000;transform:scaleX(0.8800);'>Tool name</div>
<div class=t style='left:900.50px;top:351.24px;font-size:12px;color:#000;transform:scaleX(0.8974);'>mkvmerge v31.0.0 (&#39;Dolores In A S...</div>
<div class=t style='left:807.50px;top:369.24px;font-size:12px;color:#000;transform:scaleX(0.8986);'>Media created</div>
<div class=t style='left:900.45px;top:369.24px;font-size:12px;color:#000;transform:scaleX(0.9465);'>1/14/2022 6:34 AM</div>
<div class=t style='left:808.40px;top:411.94px;font-size:12px;color:#000;transform:scaleX(0.8773);'>Audio tracks</div>
<div class=t style='left:901.40px;top:411.94px;font-size:12px;color:#000;transform:scaleX(0.8920);'>AAC 2.0 [Eng]</div>
<div class=t style='left:807.52px;top:429.54px;font-size:12px;color:#000;transform:scaleX(0.8837);'>Channels</div>
<div class=t style='left:900.53px;top:429.54px;font-size:12px;color:#000;transform:scaleX(0.8740);'>2 (stereo)</div>
<div class=t style='left:808.40px;top:447.34px;font-size:12px;color:#000;transform:scaleX(0.8656);'>Audio sample rate</div>
<div class=t style='left:901.40px;top:447.34px;font-size:12px;color:#000;transform:scaleX(0.9000);'>48.000 kHz</div>
<div class=t style='left:807.53px;top:489.24px;font-size:12px;color:#000;transform:scaleX(0.8710);'>Name</div>
<div class=t style='left:900.49px;top:489.24px;font-size:12px;color:#000;transform:scaleX(0.9093);'>FPPT.mkv</div>
<div class=t style='left:807.52px;top:507.04px;font-size:12px;color:#000;transform:scaleX(0.8771);'>Item type</div>
<div class=t style='left:900.53px;top:507.04px;font-size:12px;color:#000;transform:scaleX(0.8681);'>MKV File</div>
<div class=t style='left:799.53px;top:540.44px;font-size:12px;color:#0066cc;transform:scaleX(0.8749);text-decoration:underline;'>Remove Properties and Personal Information</div>
<div class=t style='left:926.50px;top:583.74px;font-size:12px;color:#000;transform:scaleX(0.8824);'>OK</div>
<div class=t style='left:997.39px;top:583.74px;font-size:12px;color:#000;transform:scaleX(0.9056);'>Cancel</div>
<div class=t style='left:1083.00px;top:583.74px;font-size:12px;color:#a0a0a0;transform:scaleX(0.8433);'>Apply</div>
</body></html>
